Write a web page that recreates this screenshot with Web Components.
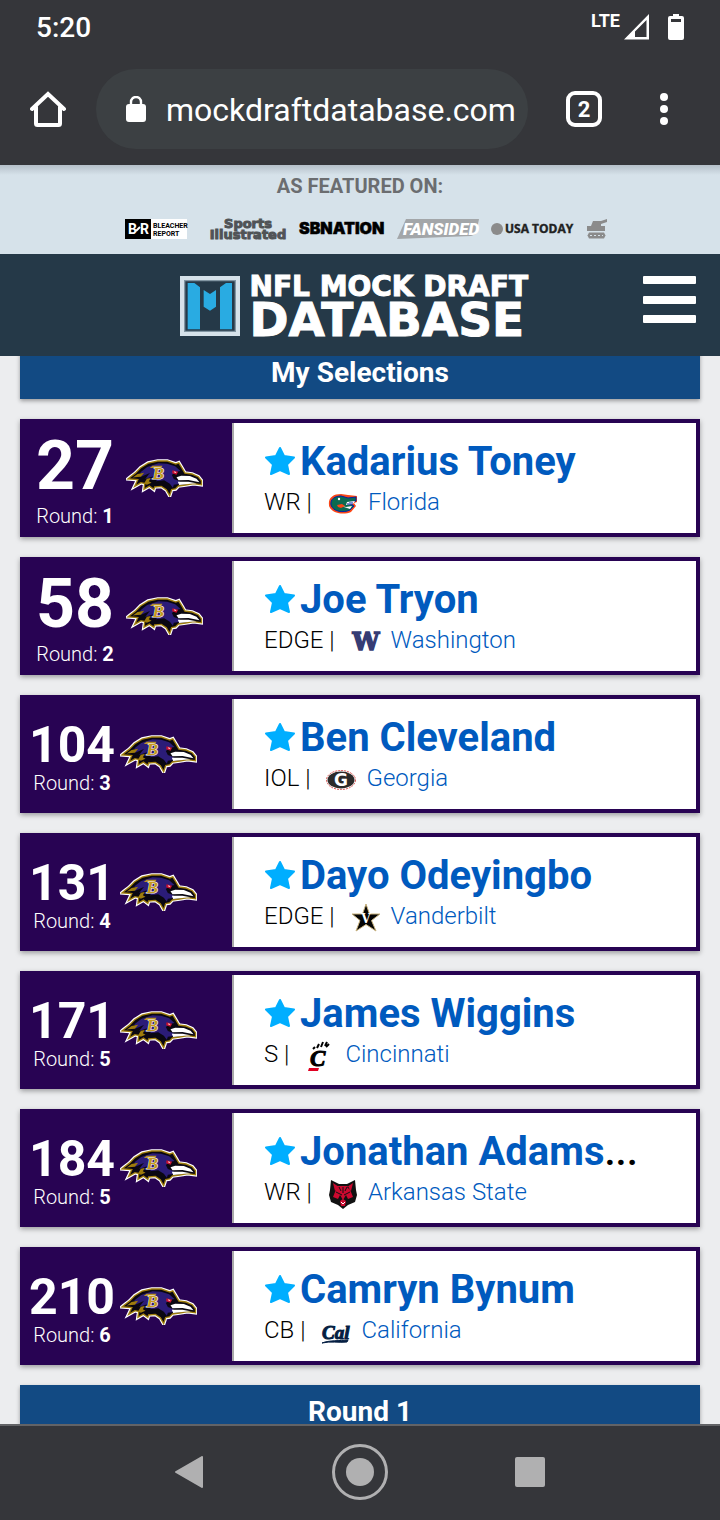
<!DOCTYPE html>
<html lang="en">
<head>
<meta charset="utf-8">
<meta name="viewport" content="width=device-width, initial-scale=1">
<title>NFL Mock Draft Database</title>
<style>
  html, body { margin: 0; height: 100%; }
  body { font-family: Roboto, "Liberation Sans", sans-serif; background: #ecedef; color: #000; }
</style>
</head>
<body>
<mock-app>
  <section-heading>My Selections</section-heading>
  <pick-card pick="27" round="1" pos="WR" logo="florida"><a slot="name" href="#toney">Kadarius Toney</a><a slot="school" href="#florida">Florida</a></pick-card>
  <pick-card pick="58" round="2" pos="EDGE" logo="washington"><a slot="name" href="#tryon">Joe Tryon</a><a slot="school" href="#washington">Washington</a></pick-card>
  <pick-card pick="104" round="3" pos="IOL" logo="georgia"><a slot="name" href="#cleveland">Ben Cleveland</a><a slot="school" href="#georgia">Georgia</a></pick-card>
  <pick-card pick="131" round="4" pos="EDGE" logo="vanderbilt"><a slot="name" href="#odeyingbo">Dayo Odeyingbo</a><a slot="school" href="#vanderbilt">Vanderbilt</a></pick-card>
  <pick-card pick="171" round="5" pos="S" logo="cincinnati"><a slot="name" href="#wiggins">James Wiggins</a><a slot="school" href="#cincinnati">Cincinnati</a></pick-card>
  <pick-card pick="184" round="5" pos="WR" logo="arkansas"><a slot="name" href="#adams">Jonathan Adams</a><span slot="name">...</span><a slot="school" href="#arkansas-state">Arkansas State</a></pick-card>
  <pick-card pick="210" round="6" pos="CB" logo="california"><a slot="name" href="#bynum">Camryn Bynum</a><a slot="school" href="#california">California</a></pick-card>
  <section-heading>Round 1</section-heading>
</mock-app>

<script>
const define = (tag, html) => customElements.define(tag, class extends HTMLElement {
  constructor() {
    super();
    this.attachShadow({ mode: 'open' }).innerHTML = typeof html === 'function' ? '' : html;
  }
  connectedCallback() {
    if (typeof html === 'function') this.shadowRoot.innerHTML = html(this);
  }
});

define('status-bar', `
<style>
  :host { display: flex; align-items: center; justify-content: space-between; height: 53px; padding: 2px 36px 0; color: #fff; box-sizing: border-box; }
  time { font-size: 28px; font-weight: 500; line-height: 56px; }
  .right { display: flex; align-items: center; }
  .lte { font-size: 18px; font-weight: 700; line-height: 24px; padding-bottom: 14px; margin-right: 4px; }
  .battery { margin-left: 18px; }
  svg { margin-bottom: 2px; }
</style>
<time>5:20</time>
<div class="right">
  <span class="lte">LTE</span>
  <svg width="26" height="26" viewBox="0 0 26 26"><path d="M25 0v25.500H0zM22.500 6 11 17.500V23h11.500z" fill="#fff" fill-rule="evenodd"/></svg>
  <svg class="battery" width="16" height="26" viewBox="0 0 16 26"><path d="M5 0h6v2h3a2 2 0 0 1 2 2v20a2 2 0 0 1-2 2H2a2 2 0 0 1-2-2V4a2 2 0 0 1 2-2h3z" fill="#fff"/><path d="M3 5h10v3H3z" fill="#35363a"/></svg>
</div>`);

define('browser-toolbar', `
<style>
  :host { display: flex; align-items: center; height: 112px; padding-right: 16px; color: #fff; }
  button { background: none; border: 0; padding: 0; height: 80px; color: inherit; display: flex; align-items: center; justify-content: center; font: inherit; }
  .home { width: 96px; }
  .icon { width: 80px; }
  label { flex: 1; min-width: 0; display: flex; align-items: center; gap: 20px; height: 80px; padding-left: 30px; box-sizing: border-box; border-radius: 40px; background: #3c4043; margin-right: 16px; overflow: hidden; }
  label svg { flex: none; }
  input { flex: 1; min-width: 0; padding: 2px 0 0; border: 0; background: none; color: #fff; font: 32px/40px Roboto, sans-serif; outline: 0; }
  .tabs { width: 36px; height: 36px; box-sizing: border-box; border: 4px solid #fff; border-radius: 9px; font: 700 22px/30px Roboto, sans-serif; text-align: center; }
</style>
<button class="home" aria-label="Home"><svg width="36" height="36" viewBox="0 0 36 36" fill="none" stroke="#fff" stroke-width="4" stroke-linejoin="round" stroke-linecap="round"><path d="M2 18 18 3l16 15" stroke-linejoin="miter"/><path d="M6 16v16.500a1.500 1.500 0 0 0 1.500 1.500h21a1.500 1.500 0 0 0 1.500-1.500V16"/></svg></button>
<label><svg width="20" height="26" viewBox="0 0 20 26"><path d="M5 9V6a5 5 0 0 1 10 0v3" fill="none" stroke="#fff" stroke-width="2.400"/><rect y="8" width="20" height="18" rx="3" fill="#fff"/></svg><input aria-label="Address" value="mockdraftdatabase.com"></label>
<button class="icon" aria-label="Tabs"><span class="tabs">2</span></button>
<button class="icon" aria-label="Menu"><svg width="8" height="32" viewBox="0 0 8 32" fill="#fff"><circle cx="4" cy="4" r="4"/><circle cx="4" cy="16" r="4"/><circle cx="4" cy="28" r="4"/></svg></button>`);

define('featured-strip', `
<style>
  :host { display: block; height: 89px; box-sizing: border-box; padding-top: 9px; background: linear-gradient(#b5c0c9, #d6e2ea 10px); }
  p { margin: 0; text-align: center; font-size: 20px; font-weight: 700; line-height: 24px; color: #6b6d70; }
  div { display: flex; justify-content: center; align-items: center; gap: 12px; padding: 18px 0 0 12px; height: 26px; }
  svg { flex: none; overflow: visible; }
</style>
<p>AS FEATURED ON:</p>
<div>
  <svg width="62" height="20"><path d="M0 0h62v20H0z" fill="#fff"/><path d="M0 0h26v20H0z"/><g font-family="Roboto" font-weight="700"><text x="3" y="15" font-size="14" fill="#fff">B</text><text x="15" y="15" font-size="14" fill="#fff">R</text><path d="m11 12 4-4" stroke="#fff" stroke-width="2"/><text x="28" y="9" font-size="7">BLEACHER</text><text x="28" y="17" font-size="7">REPORT</text></g></svg>
  <svg width="88" height="20" font-family="DejaVu Sans" font-weight="700" font-size="13" fill="#505356" stroke="#505356" stroke-width="1"><text x="49" y="9" text-anchor="middle">Sports</text><text x="49" y="20" text-anchor="middle">Illustrated</text></svg>
  <svg width="86" height="20"><text x="0" y="15" font-family="Inter" font-weight="900" font-size="16" stroke="#000" stroke-width=".5">SBNATION</text></svg>
  <svg width="82" height="20"><path d="M9 0h73l-3 15-5 2-74 3z" fill="#a3a6a9"/><text x="6" y="16" font-family="Roboto" font-weight="900" font-style="italic" font-size="17" fill="#fff">FANSIDED</text></svg>
  <svg width="84" height="20"><circle cx="6" cy="10" r="6" fill="#8b8b8b"/><text x="14" y="14" font-family="Open Sans" font-weight="700" font-size="12" fill="#222" stroke="#222" stroke-width=".4">USA TODAY</text></svg>
  <svg width="20" height="20" fill="#8b8b8b"><path d="M6 2h8l6-2v3l-6 2v2h4v5H0V7h4z"/><path d="M2 13.500h15l1.500 3-1.500 3H2l-1.500-3z"/><path d="M3 16.500h13" stroke="#d6e2ea" stroke-dasharray="2 2"/></svg>
</div>`);

define('site-header', `
<style>
  :host { display: grid; grid-template-columns: 1fr auto 1fr; align-items: center; height: 102px; box-sizing: border-box; padding: 2px 24px 0; background: #253948; color: #fff; }
  a { grid-column: 2; display: flex; gap: 10px; padding-right: 14px; color: inherit; text-decoration: none; font-family: "DejaVu Sans", sans-serif; font-weight: 700; white-space: nowrap; height: 60px; -webkit-text-stroke: 1px #fff; }
  .words { display: flex; flex-direction: column; width: 277px; }
  .top { font-size: 28px; line-height: 22px; }
  .big { font-size: 47px; line-height: 44px; }
  button { justify-self: end; padding: 0; border: 0; background: none; display: flex; margin-bottom: 12px; }
</style>
<a href="#home">
  <svg width="60" height="60" viewBox="60 78 180 180"><path d="M60 78h180v180H60z" fill="#d6e2ea"/><path d="M72 90h156v156H72z" fill="#8296a3"/><path d="M76 94h148v148H76z" fill="#253948"/><path d="M83 99h20l17 13v126H83zM216 99h-18l-18 13v126h36zM131 120l19 12 18-12v50l-18 12-19-12z" fill="#29abe2"/></svg>
  <span class="words"><span class="top">NFL MOCK DRAFT</span><span class="big">DATABASE</span></span>
</a>
<button aria-label="Open menu"><svg width="53" height="48" viewBox="0 0 53 48" fill="#fff"><rect width="53" height="8" rx="1"/><rect y="20" width="53" height="8" rx="1"/><rect y="39" width="53" height="8" rx="1"/></svg></button>`);

define('section-heading', `
<style>
  :host { display: block; background: #124a83; box-shadow: 0 2px 4px rgba(0,0,0,.35); }
  h2 { margin: 0; color: #fff; text-align: center; font-size: 28px; font-weight: 700; line-height: 53px; }
</style>
<h2><slot></slot></h2>`);

define('team-logo', `
<style>:host { display: flex; flex: none; }</style>
<svg width="77" height="38" viewBox="17 26 230 114" role="img" aria-label="Baltimore Ravens">
  <defs><path id="head" d="M28 84 46 70 62 54 84 40 112 34h28l26 9 8-3 8 13 10 17 22 3 18 8 9 11v9l-22-3-24 4-22 3-9 9-12 2-5 15-8-14-16-11-22 2-2 6-12-9-14 8 2-15-14-3-14 8 8-17z"/></defs>
  <use href="#head" stroke="#fff" stroke-width="15"/>
  <use href="#head" stroke="#9e7c0c" stroke-width="8"/>
  <use href="#head" fill="#0a0711"/>
  <path d="m60 66 20-16 34-11 26 1 24 8 16 14-14 3-12 9 6 12 18 7-2 8-16 2-3 9-9-12-17-10-25 3 8-9-26 5 10-11-24 8 14-18-26 11z" fill="#2b1c78"/>
  <path d="m36 82 15-11 20-4-10 12-19 2zm35 17 8-14 12-2-6 10 8 4-14 6z" fill="#9e7c0c"/>
  <path d="m168 81 14-5 26 1 20 8 9 11-33-7-30 1z" fill="#fff"/>
  <path d="m172 94 32 0 24 5-25 2-27 3z" fill="#fff"/>
  <path d="M96 46h30l-4 7H88z" fill="#b8922a"/>
  <text x="96" y="86" font-family="Liberation Serif" font-size="52" font-weight="700" font-style="italic" fill="#c69a20" stroke="#fff" stroke-width="3" paint-order="stroke">B</text>
  <path d="m156 60 17 4-5 9-13-4z" fill="#c8102e"/><path d="m161 63 7 3-5 2z" fill="#fff"/>
</svg>`);

const logos = {
  florida: `<path d="M1 16C0 9 5 5 13 5l7 1 9 1v6l-3 1 2 3-5 6c-7 3-19 2-22-6z" fill="#fa4616"/><path d="M3 16C2 10 7 7 13 7l7 2 8-1v4l-8 2 6 3-4 4C16 24 5 23 3 16z" fill="#0b6a50" stroke="#0021a5"/><path d="m19 13 8-1-2 3-7 1zm-9 3 8 2 6-1-2 3z" fill="#fff"/><path d="m9 16 5-1 3 2-4 2-3-1z" fill="#fa4616"/><path d="M20 14v2m2-3v3m2-3v3" stroke="#0021a5" fill="none"/><circle cx="11" cy="10" r="1.200" fill="#fff"/>`,
  washington: `<text x="15" y="23" text-anchor="middle" font-family="DejaVu Serif" font-weight="700" font-size="24" fill="#363c74" stroke="#363c74" stroke-width="1.500">W</text>`,
  georgia: `<ellipse cx="15" cy="15" rx="14.500" ry="9.500" fill="#fff" stroke="#d9534f" stroke-dasharray="2 1"/><ellipse cx="15" cy="15" rx="13.500" ry="8.500" fill="#2b2a29"/><text x="15" y="21" text-anchor="middle" font-family="DejaVu Sans" font-weight="700" font-size="17" fill="#fff">G</text>`,
  vanderbilt: `<path d="m15 1 3.500 10H29l-8.500 6.500L25 28l-10-6.500L5 28l4-10.500L1 11h10.500z" fill="#050505" stroke="#c8b27d"/><text x="15" y="20" text-anchor="middle" font-family="DejaVu Serif" font-weight="700" font-size="12" fill="#fff">V</text>`,
  cincinnati: `<text x="5" y="25" font-family="Liberation Serif" font-weight="700" font-style="italic" font-size="23" stroke="#000">C</text><path d="M10 6l-2 2m6-5-2 4m6-6-2 5m6-5-2 4m4-2-3 3" stroke="#000" stroke-width="2"/><path d="M4 27h10l-1 3H3z" fill="#e00122"/>`,
  arkansas: `<path d="m3 1 8 4h8l8-4 1 10 1 5-2 7-7 3-5 4-5-4-7-3-2-7 1-5z" fill="#111"/><path d="m5 4 6 4-4 4zm20 0-6 4 4 4zM10 7h10l3 6 2 5-5 2-2-4-3 5-3-5-2 4-5-2 2-5z" fill="#cc092f"/><path d="m12 22 3-2 3 2-1 5h-4z" fill="#cc092f"/><path d="m8 13 6 3m8-3-6 3M15 8v6m-4-6 2 4m6-4-2 4" stroke="#111"/><path d="m13 23 2 2 2-2" stroke="#fff" fill="none"/>`,
  california: `<text x="1" y="22" font-family="Liberation Serif" font-weight="700" font-style="italic" font-size="19" fill="#041e42" stroke="#041e42">Cal</text><path d="M1 26c7-3 18-2 26-3l-1 2c-8 1-17-1-25 1z" fill="#041e42" stroke="#041e42"/>`
};
define('school-logo', el => `
<style>:host { display: flex; flex: none; } svg { overflow: visible; }</style>
<svg width="30" height="30" viewBox="0 0 30 30" aria-hidden="true">${logos[el.getAttribute('name')]}</svg>`);

define('pick-card', el => `
<style>
  :host { display: flex; height: 110px; border: 4px solid #280353; background: #fff; box-shadow: 0 2px 5px rgba(0,0,0,.35); }
  .pick { flex: none; width: 208px; display: flex; align-items: center; gap: 12px; padding-left: 12px; box-sizing: border-box; background: #280353; color: #fff; }
  .num { width: 78px; text-align: center; white-space: nowrap; }
  strong { display: block; font-size: 68px; line-height: 76px; font-weight: 700; }
  small { display: block; font-size: 20px; line-height: 24px; font-weight: 300; }
  b { font-weight: 700; }
  .pick.long { padding-left: 4px; gap: 4px; }
  .long .num { width: 88px; padding-top: 2px; }
  .long strong { font-size: 50px; line-height: 56px; }
  .long small { line-height: 20px; }
  .info { flex: 1; min-width: 0; border-left: 2px solid #aaa; padding-left: 30px; display: flex; flex-direction: column; justify-content: center; }
  h3 { margin: 0; display: flex; align-items: center; font-size: 40px; line-height: 48px; font-weight: 700; white-space: nowrap; }
  h3 svg { flex: none; margin: 0 4px 2px 0; }
  .line { display: flex; align-items: center; height: 32px; font-size: 24px; line-height: 32px; font-weight: 300; white-space: nowrap; }
  school-logo { margin: 4px 10px 0 16px; height: 30px; }
  ::slotted(a) { color: #005abe; text-decoration: none; }
  ::slotted(span) { font-weight: 500; }
</style>
<div class="pick ${el.getAttribute('pick').length > 2 ? 'long' : ''}">
  <div class="num"><strong>${el.getAttribute('pick')}</strong><small>Round: <b>${el.getAttribute('round')}</b></small></div>
  <team-logo></team-logo>
</div>
<div class="info">
  <h3><svg width="32" height="30" viewBox="0 0 32 30"><path d="m16 2 4 8 10 1.500-7 7L25 28l-9-4-9 4 2-9.500-7-7L12 10z" fill="#00aeff" stroke="#00aeff" stroke-width="2" stroke-linejoin="round"/></svg><slot name="name"></slot></h3>
  <div class="line"><span>${el.getAttribute('pos')} |</span><school-logo name="${el.getAttribute('logo')}"></school-logo><slot name="school"></slot></div>
</div>`);

define('system-nav', `
<style>
  :host { display: flex; justify-content: center; height: 94px; border-top: 2px solid #626366; background: #35363a; }
  button { width: 170px; height: 92px; padding: 0; border: 0; background: none; display: flex; align-items: center; justify-content: center; }
</style>
<button aria-label="Back"><svg width="30" height="32" viewBox="0 0 30 32"><path d="M27 1v30L1 16z" fill="#b0b0b1" stroke="#b0b0b1" stroke-linejoin="round" stroke-width="2"/></svg></button>
<button aria-label="Home screen"><svg width="56" height="56" viewBox="0 0 56 56"><circle cx="28" cy="28" r="26.500" fill="none" stroke="#b0b0b1" stroke-width="3"/><circle cx="28" cy="28" r="14" fill="#b0b0b1"/></svg></button>
<button aria-label="Recent apps"><svg width="30" height="30" viewBox="0 0 30 30"><rect width="30" height="30" rx="2" fill="#b0b0b1"/></svg></button>`);

define('mock-app', `
<style>
  :host { display: flex; flex-direction: column; height: 100vh; overflow: hidden; }
  .chrome { background: #35363a; }
  .chrome, featured-strip, site-header, system-nav { flex: none; }
  main { flex: 1; min-height: 0; overflow: hidden; background: #ecedef; }
  .feed { display: flex; flex-direction: column; gap: 20px; padding: 0 20px; margin-top: -10px; }
</style>
<div class="chrome"><status-bar></status-bar><browser-toolbar></browser-toolbar></div>
<featured-strip></featured-strip>
<site-header></site-header>
<main><div class="feed"><slot></slot></div></main>
<system-nav></system-nav>`);
</script>
</body>
</html>
